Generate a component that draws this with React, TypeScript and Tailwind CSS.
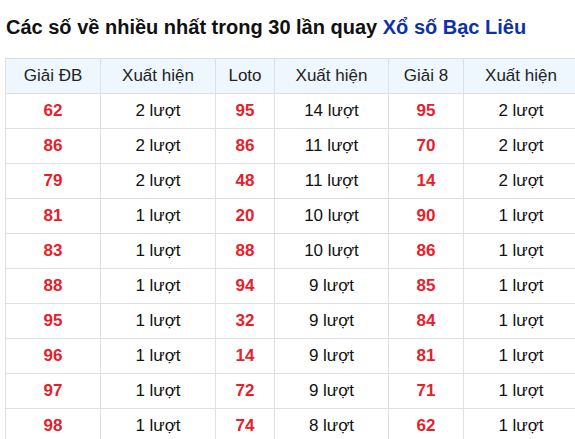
import React from "react";

const rows: [string, string, string, string, string, string][] = [
  ["62", "2 lượt", "95", "14 lượt", "95", "2 lượt"],
  ["86", "2 lượt", "86", "11 lượt", "70", "2 lượt"],
  ["79", "2 lượt", "48", "11 lượt", "14", "2 lượt"],
  ["81", "1 lượt", "20", "10 lượt", "90", "1 lượt"],
  ["83", "1 lượt", "88", "10 lượt", "86", "1 lượt"],
  ["88", "1 lượt", "94", "9 lượt", "85", "1 lượt"],
  ["95", "1 lượt", "32", "9 lượt", "84", "1 lượt"],
  ["96", "1 lượt", "14", "9 lượt", "81", "1 lượt"],
  ["97", "1 lượt", "72", "9 lượt", "71", "1 lượt"],
  ["98", "1 lượt", "74", "8 lượt", "62", "1 lượt"],
];

const headers = ["Giải ĐB", "Xuất hiện", "Loto", "Xuất hiện", "Giải 8", "Xuất hiện"];

export default function App() {
  return (
    <div
      className="w-[575px] h-[439px] overflow-hidden bg-white text-[#111]"
      style={{ fontFamily: '"Liberation Sans", Arial, sans-serif' }}
    >
      <h2 className="pl-[6px] pt-[13px] h-[58px] text-[20px] leading-[28px] font-bold">
        Các số về nhiều nhất trong 30 lần quay{" "}
        <span className="text-[#0f31a8]">Xổ số Bạc Liêu</span>
      </h2>
      <div className="pl-[5px]">
        <table className="table-fixed border-collapse w-[573px] text-[17px]">
          <colgroup>
            <col className="w-[95px]" />
            <col className="w-[115px]" />
            <col className="w-[59px]" />
            <col className="w-[114px]" />
            <col className="w-[75px]" />
            <col className="w-[115px]" />
          </colgroup>
          <thead>
            <tr className="bg-[#eef6fe]">
              {headers.map((h, i) => (
                <th
                  key={i}
                  className="h-[35px] border border-[#dcdfe5] font-normal text-center text-[#222] p-0"
                >
                  {h}
                </th>
              ))}
            </tr>
          </thead>
          <tbody>
            {rows.map((r, ri) => (
              <tr key={ri}>
                {r.map((c, ci) => (
                  <td
                    key={ci}
                    className={
                      "h-[35px] border border-[#dcdfe5] text-center p-0 " +
                      (ci % 2 === 0 ? "font-bold text-[#e8202a]" : "text-[#111]")
                    }
                  >
                    {c}
                  </td>
                ))}
              </tr>
            ))}
          </tbody>
        </table>
      </div>
    </div>
  );
}
